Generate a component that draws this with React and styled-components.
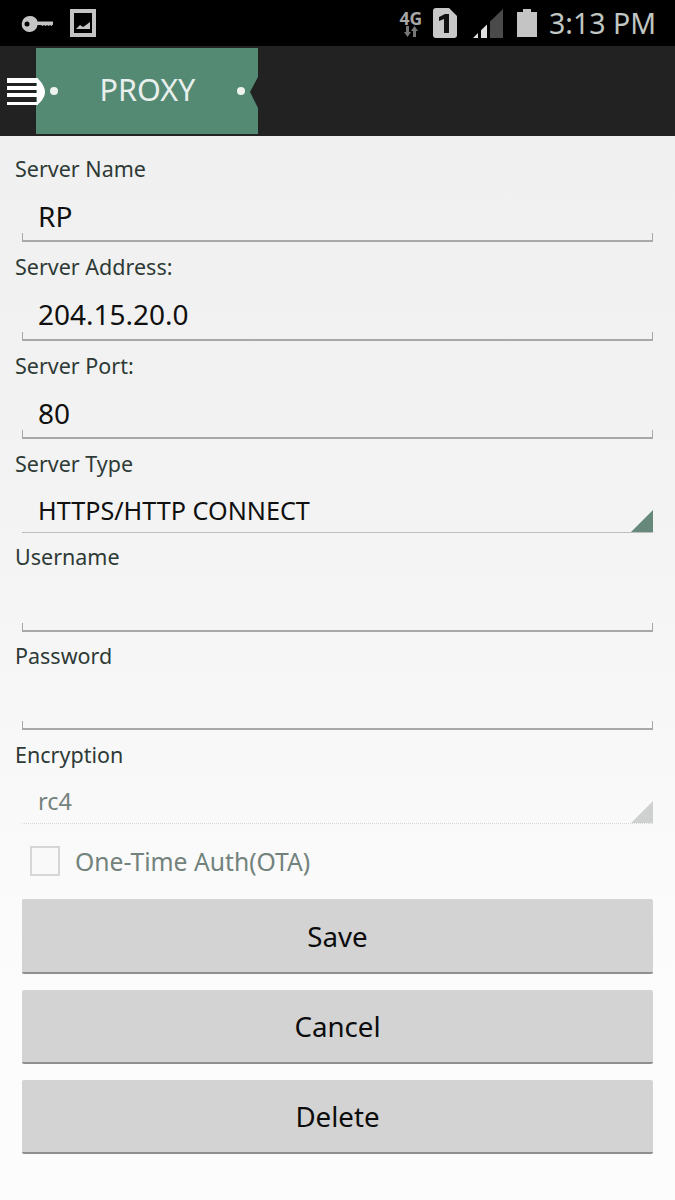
import React from 'react';
import styled, { createGlobalStyle } from 'styled-components';

const Global = createGlobalStyle`
  html, body { margin: 0; padding: 0; background: #fafafa; }
  body { font-family: "Noto Sans", "Open Sans", sans-serif; }
`;

const Page = styled.div`
  width: 675px;
  height: 1200px;
  overflow: hidden;
  display: flex;
  flex-direction: column;
  background: linear-gradient(#f0f0f0 136px, #f3f3f3 500px, #f9f9f9 800px, #fcfcfc 1000px);
`;

const StatusBar = styled.div`
  height: 46px;
  flex: none;
  background: #000;
  display: flex;
  align-items: center;
  padding: 0 19px 0 21px;
  color: #c4c4c4;
`;

const StatusLeft = styled.div`
  display: flex;
  align-items: center;
  gap: 17px;
  flex: 1;
`;

const StatusRight = styled.div`
  display: flex;
  align-items: center;
`;

const NetType = styled.div`
  width: 26px;
  display: flex;
  flex-direction: column;
  align-items: center;
  font-size: 17.5px;
  font-weight: 700;
  line-height: 16px;
  color: #a8a8a8;
  margin-right: 9px;
`;

const Clock = styled.span`
  font-size: 28.5px;
  line-height: 46px;
  margin-left: 12px;
  color: #c0c6c2;
`;

const Toolbar = styled.div`
  height: 90px;
  flex: none;
  background: #222;
  display: flex;
  align-items: flex-start;
  position: relative;
  padding: 2px 0 0 36px;
  box-sizing: border-box;
`;

const Tab = styled.div`
  width: 222px;
  height: 86px;
  background: #548a74;
  clip-path: polygon(0 0, 100% 0, 100% 29px, 96.4% 44px, 100% 60px, 100% 100%, 0 100%);
  display: flex;
  align-items: center;
  justify-content: space-between;
  padding: 0 13px 0 14px;
  box-sizing: border-box;
`;

const Dot = styled.span`
  width: 8px;
  height: 8px;
  border-radius: 50%;
  background: #eef3f0;
`;

const TabTitle = styled.span`
  color: #e9efec;
  font-size: 30.5px;
  padding-bottom: 4px;
`;

const Burger = styled.svg`
  position: absolute;
  left: 7px;
  top: 32px;
`;

const Form = styled.div`
  flex: 1;
  display: flex;
  flex-direction: column;
  padding: 0 22px;
`;

const Field = styled.div`
  height: ${p => p.$height}px;
  flex: none;
  display: flex;
  flex-direction: column;
`;

const Label = styled.div`
  font-size: 21.5px;
  line-height: 30px;
  height: 30px;
  margin-left: -7px;
  color: #2e3a36;
  margin-top: ${p => p.$top || 0}px;
`;

const InputBox = styled.div`
  height: ${p => p.$height}px;
  flex: none;
  box-sizing: border-box;
  position: relative;
  padding: 12px 0 0 16px;
  border-bottom: 2px solid #a7a9a8;
  font-size: 28px;
  line-height: 40px;
  color: #101010;

  &::before, &::after {
    content: '';
    position: absolute;
    bottom: 0;
    width: 1px;
    height: 7px;
    background: #a7a9a8;
  }
  &::before { left: 0; }
  &::after { right: 0; }
`;

const Select = styled.div`
  height: ${p => p.$height}px;
  flex: none;
  box-sizing: border-box;
  position: relative;
  padding: 13px 0 0 16px;
  font-size: ${p => p.$disabled ? 23.5 : 25.2}px;
  line-height: 36px;
  color: ${p => p.$disabled ? '#74837d' : '#101010'};
  border-bottom: 1px ${p => p.$disabled ? 'dotted #d8d8d8' : 'solid #bcbcbc'};

  &::after {
    content: '';
    position: absolute;
    right: 0;
    bottom: 0;
    width: 22px;
    height: 22px;
    background: ${p => p.$disabled ? '#cfd1d0' : '#66897c'};
    clip-path: polygon(100% 0, 100% 100%, 0 100%);
  }
`;

const CheckRow = styled.div`
  height: 70px;
  flex: none;
  display: flex;
  align-items: center;
  padding: 0 0 6px 8px;
  box-sizing: border-box;
`;

const CheckBox = styled.span`
  width: 30px;
  height: 30px;
  box-sizing: border-box;
  border: 2px solid #d6d6d6;
  background: #f9f9f9;
  margin-right: 15px;
`;

const CheckLabel = styled.span`
  font-size: 24.7px;
  color: #72827c;
`;

const Buttons = styled.div`
  display: flex;
  flex-direction: column;
`;

const Button = styled.button`
  height: ${p => p.$height}px;
  flex: none;
  margin-top: ${p => p.$top}px;
  border: 0;
  padding: 0;
  border-bottom: 2px solid #8f8f8f;
  border-radius: 2px;
  background: #d3d3d3;
  color: #0c0c0c;
  font-family: inherit;
  font-size: 27.7px;
`;

const rows = [
  { label: 'Server Name', value: 'RP', height: 116, box: 58, labelTop: 18 },
  { label: 'Server Address:', value: '204.15.20.0', height: 99, box: 59 },
  { label: 'Server Port:', value: '80', height: 98, box: 58 },
];

function KeyIcon() {
  return (
    <svg width="32" height="20" viewBox="0 0 32 20">
      <path fill="#c4c4c4" fillRule="evenodd" d="M9 3a8 8 0 0 1 7.600 5.500H32v3l-1.500 1.500-1.500-1-1.500 1-1.500-1-1.500 1-1.500-1-1.500 1-1.500-1H16.600A8 8 0 1 1 9 3zM6 8.500a2.500 2.500 0 1 0 0 5 2.500 2.500 0 0 0 0-5z" />
    </svg>
  );
}

function PictureIcon() {
  return (
    <svg width="26" height="28" viewBox="0 0 26 28">
      <path fill="#c4c4c4" fillRule="evenodd" d="M0 0h26v28H0zM4 4v20h18V4z" />
      <path fill="#c4c4c4" d="M6 20l4-4 3 2 3-2 4-3v7z" />
    </svg>
  );
}

function NetArrows() {
  return (
    <svg width="18" height="11" viewBox="0 0 18 11">
      <path fill="#777" d="M4 0h3v6h2l-3.500 5L2 6h2zM11 11h3V5h2l-3.500-5L9 5h2z" />
    </svg>
  );
}

function SimIcon() {
  return (
    <svg width="24" height="30" viewBox="0 0 24 30">
      <path fill="#c8c8c8" d="M3 0h13l8 8v19a3 3 0 0 1-3 3H3a3 3 0 0 1-3-3V3a3 3 0 0 1 3-3z" />
      <path fill="#111" d="M6 9l6-3h4v19h-5V11l-5 2z" />
    </svg>
  );
}

function SignalIcon() {
  return (
    <svg width="30" height="29" viewBox="0 0 30 29" style={{ marginLeft: 16 }}>
      <path fill="#4a4a4a" d="M30 0v29H17V12.600z" />
      <path fill="#e0e0e0" d="M0 29l5-5v5zM8 21.300l6-5.800V29H8z" />
    </svg>
  );
}

function BatteryIcon() {
  return (
    <svg width="20" height="28" viewBox="0 0 20 28" style={{ marginLeft: 14 }}>
      <path fill="#c4c4c4" d="M6 0h8v3h6v25H0V3h6z" />
    </svg>
  );
}

export default function App() {
  return (
    <Page>
      <Global />
      <StatusBar>
        <StatusLeft>
          <KeyIcon />
          <PictureIcon />
        </StatusLeft>
        <StatusRight>
          <NetType>
            4G
            <NetArrows />
          </NetType>
          <SimIcon />
          <SignalIcon />
          <BatteryIcon />
          <Clock>3:13 PM</Clock>
        </StatusRight>
      </StatusBar>
      <Toolbar>
        <Tab>
          <Dot />
          <TabTitle>PROXY</TabTitle>
          <Dot />
        </Tab>
        <Burger width="38" height="28" viewBox="0 0 38 28">
          <path fill="#fff" d="M0 0h31v5H0zM0 8h31v4H0zM0 15h31v4H0zM0 24h31v3H0z" />
          <path fill="#fff" d="M30 0c4 3 8 9 8 14s-4 10-8 13z" />
        </Burger>
      </Toolbar>
      <Form>
        {rows.map(r => (
          <Field key={r.label} $height={r.height}>
            <Label $top={r.labelTop}>{r.label}</Label>
            <InputBox $height={r.box}>{r.value}</InputBox>
          </Field>
        ))}
        <Field $height={93}>
          <Label>Server Type</Label>
          <Select $height={54}>HTTPS/HTTP CONNECT</Select>
        </Field>
        <Field $height={99}>
          <Label>Username</Label>
          <InputBox $height={60} />
        </Field>
        <Field $height={99}>
          <Label>Password</Label>
          <InputBox $height={59} />
        </Field>
        <Field $height={89}>
          <Label>Encryption</Label>
          <Select $height={54} $disabled>rc4</Select>
        </Field>
        <CheckRow>
          <CheckBox />
          <CheckLabel>One-Time Auth(OTA)</CheckLabel>
        </CheckRow>
        <Buttons>
          <Button $height={75} $top={0}>Save</Button>
          <Button $height={74} $top={16}>Cancel</Button>
          <Button $height={74} $top={16}>Delete</Button>
        </Buttons>
      </Form>
    </Page>
  );
}
